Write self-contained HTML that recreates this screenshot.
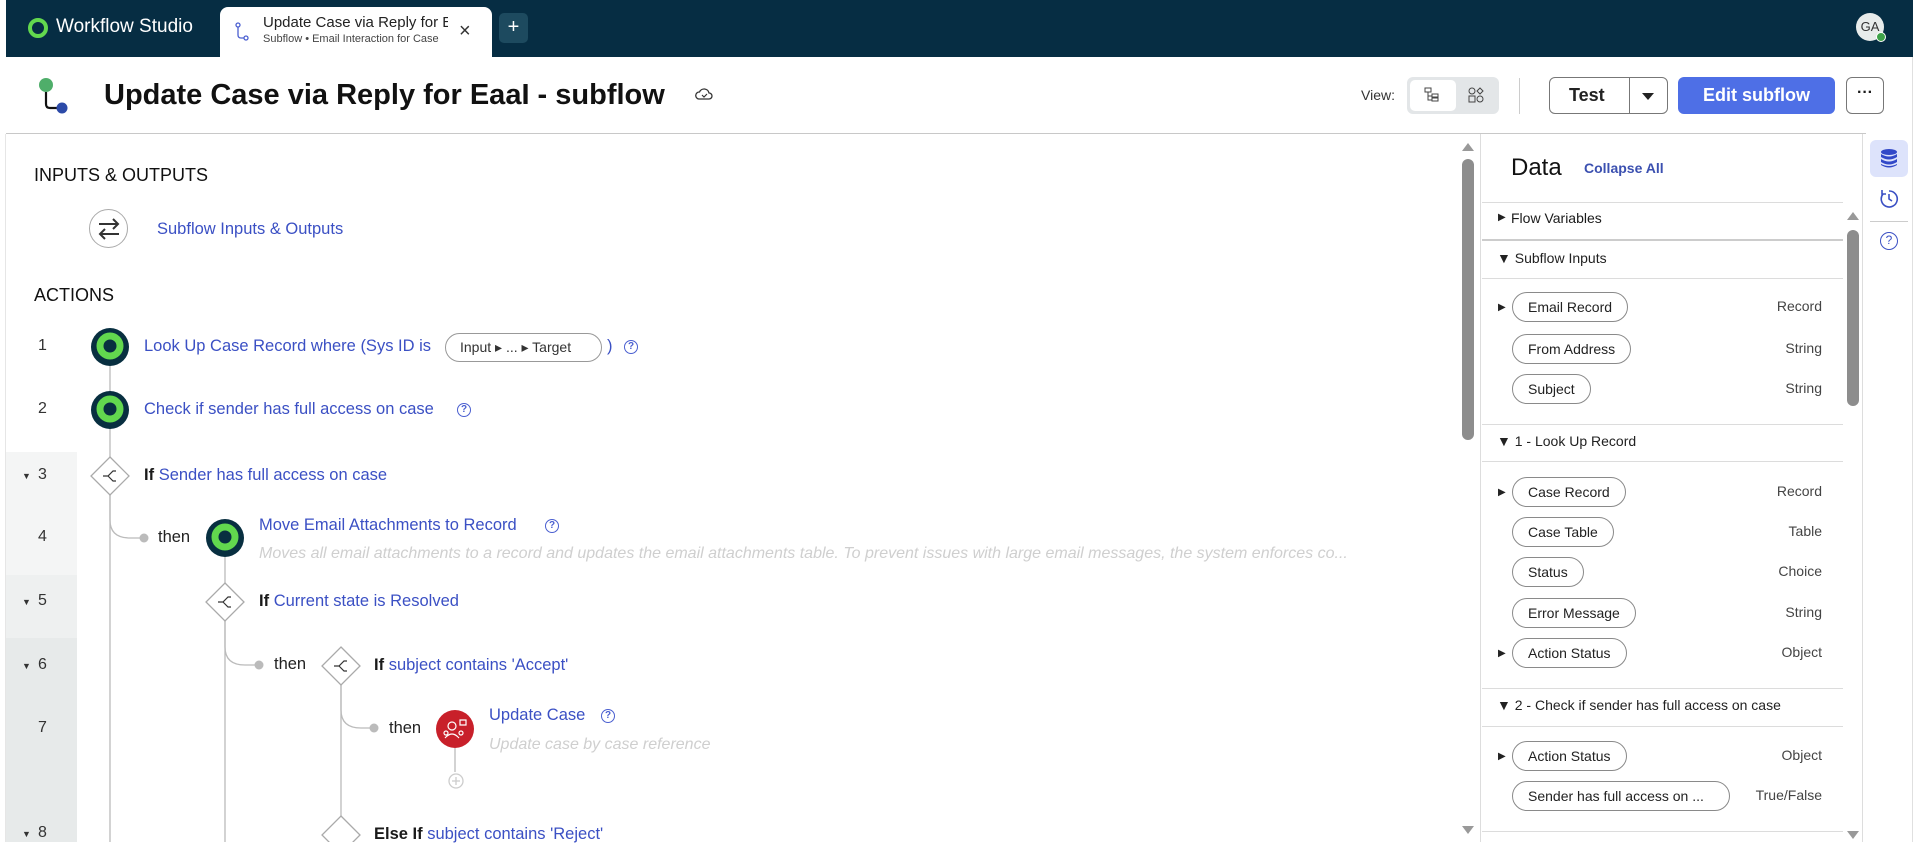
<!DOCTYPE html>
<html><head><meta charset="utf-8">
<style>
*{box-sizing:border-box;margin:0;padding:0}
body{width:1918px;height:842px;overflow:hidden;background:#fff;font-family:"Liberation Sans",sans-serif;color:#1a1a1a;position:relative}
.a{position:absolute;white-space:nowrap}
.lnk{color:#3b50c4}
.q{position:absolute;width:14px;height:14px;border:1.5px solid #4a5fd0;border-radius:50%;font-size:10px;color:#4a5fd0;text-align:center;line-height:11px;font-weight:bold}
.num{position:absolute;left:38px;font-size:16px;color:#333}
.tri{position:absolute;left:22px;font-size:9px;color:#333}
.pill{position:absolute;left:1512px;height:30px;border:1px solid #8a8a8a;border-radius:15px;padding:0 15px;font-size:14px;line-height:28px;color:#222}
.ty{position:absolute;right:96px;font-size:14px;color:#444}
.sh{position:absolute;left:1497px;font-size:14px;color:#222}
.hl{position:absolute;left:1482px;width:361px;height:1px;background:#dcdcdc}
.arr{position:absolute;left:1498px;font-size:10px;color:#222}
.cv{font-size:16.5px}
</style></head><body>
<!-- top bar -->
<div class="a" style="left:6px;top:0;width:1907px;height:57px;background:#062d43"></div>
<div class="a" style="left:28px;top:18px;width:20px;height:20px;border-radius:50%;border:4px solid #62d84e"></div>
<div class="a" style="left:56px;top:16px;font-size:19px;color:#fff">Workflow Studio</div>
<div class="a" style="left:220px;top:7px;width:272px;height:50px;background:#fff;border-radius:8px 8px 0 0"></div>
<svg class="a" style="left:234px;top:22px" width="16" height="20" viewBox="0 0 16 20"><circle cx="4" cy="3" r="2" fill="none" stroke="#4a5fd0" stroke-width="1.3"/><path d="M4 5v8q0 3 3 3h3" fill="none" stroke="#4a5fd0" stroke-width="1.3"/><circle cx="12" cy="16" r="2" fill="none" stroke="#4a5fd0" stroke-width="1.3"/></svg>
<div class="a" style="left:263px;top:14px;font-size:15px;color:#222;width:185px;overflow:hidden">Update Case via Reply for Eaal</div>
<div class="a" style="left:263px;top:33px;font-size:11px;color:#444;width:185px;overflow:hidden">Subflow • Email Interaction for Case</div>
<div class="a" style="left:459px;top:20px;font-size:20px;color:#333">×</div>
<div class="a" style="left:499px;top:13px;width:29px;height:30px;background:#1d4a5f;border-radius:5px;color:#fff;font-size:20px;text-align:center;line-height:28px">+</div>
<div class="a" style="left:1856px;top:13px;width:28px;height:28px;border-radius:50%;background:#e8eceb;font-size:13px;color:#333;text-align:center;line-height:28px">GA</div>
<div class="a" style="left:1876px;top:32px;width:10px;height:10px;border-radius:50%;background:#3fa34a;border:1.5px solid #fff"></div>
<!-- header -->
<svg class="a" style="left:34px;top:76px" width="36" height="40" viewBox="0 0 36 40"><circle cx="12" cy="9" r="7" fill="#4fae6a"/><path d="M12 16v12q0 4 4 4h9" fill="none" stroke="#111" stroke-width="2.2"/><circle cx="28" cy="32" r="5.5" fill="#2c4aa8"/></svg>
<div class="a" style="left:104px;top:79px;font-size:29px;font-weight:bold;color:#111">Update Case via Reply for EaaI - subflow</div>
<svg class="a" style="left:695px;top:87px" width="18" height="14" viewBox="0 0 18 14"><path d="M4 12h10a3 3 0 000-6 5 5 0 00-9.5-1A3.5 3.5 0 004 12z" fill="none" stroke="#333" stroke-width="1.3"/><path d="M7 8l2 2 3-3" fill="none" stroke="#333" stroke-width="1.2"/></svg>
<div class="a" style="left:1361px;top:87px;font-size:14px;color:#333">View:</div>
<div class="a" style="left:1407px;top:77px;width:92px;height:37px;background:#e3e6e8;border-radius:6px"></div>
<div class="a" style="left:1410px;top:80px;width:46px;height:31px;background:#fff;border-radius:5px"></div>
<svg class="a" style="left:1424px;top:87px" width="16" height="16" viewBox="0 0 16 16" fill="none" stroke="#444" stroke-width="1"><rect x="1" y="1" width="6" height="4"/><path d="M4 5v8h4M4 9h4"/><rect x="8" y="7" width="6" height="3"/><rect x="8" y="11" width="6" height="3"/></svg>
<svg class="a" style="left:1468px;top:87px" width="16" height="16" viewBox="0 0 16 16" fill="none" stroke="#444" stroke-width="1"><circle cx="4" cy="4" r="3"/><path d="M12 1l3 3-3 3-3-3z"/><rect x="1" y="9" width="6" height="6"/><circle cx="12" cy="12" r="3"/></svg>
<div class="a" style="left:1519px;top:78px;width:1px;height:36px;background:#ccc"></div>
<div class="a" style="left:1549px;top:77px;width:119px;height:37px;border:1px solid #777;border-radius:6px"></div>
<div class="a" style="left:1629px;top:77px;width:1px;height:37px;background:#777"></div>
<div class="a" style="left:1569px;top:85px;font-size:18px;font-weight:bold;color:#222">Test</div>
<div class="a" style="left:1642px;top:93px;width:0;height:0;border-left:6px solid transparent;border-right:6px solid transparent;border-top:7px solid #222"></div>
<div class="a" style="left:1678px;top:77px;width:157px;height:37px;background:#4e6fe6;border-radius:6px;color:#fff;font-size:18px;font-weight:bold;text-align:center;line-height:37px">Edit subflow</div>
<div class="a" style="left:1846px;top:77px;width:38px;height:37px;border:1px solid #777;border-radius:6px;text-align:center;font-size:16px;font-weight:bold;line-height:30px">···</div>
<div class="a" style="left:6px;top:133px;width:1860px;height:1px;background:#c8c8c8"></div>
<div class="a" style="left:1912px;top:57px;width:1px;height:785px;background:#e0e0e0"></div>
<div class="a" style="left:5px;top:134px;width:1px;height:708px;background:#e6e6e6"></div>
<!-- gutter -->
<div class="a" style="left:6px;top:452px;width:71px;height:123px;background:#f4f5f5"></div>
<div class="a" style="left:6px;top:575px;width:71px;height:63px;background:#eef0f0"></div>
<div class="a" style="left:6px;top:638px;width:71px;height:204px;background:#e7eaea"></div>
<!-- canvas -->
<div class="a" style="left:34px;top:165px;font-size:18px;color:#111">INPUTS &amp; OUTPUTS</div>
<div class="a" style="left:89px;top:209px;width:39px;height:39px;border:1px solid #aaa;border-radius:50%"></div>
<svg class="a" style="left:96px;top:216px" width="26" height="26" viewBox="0 0 26 26" fill="none" stroke="#333" stroke-width="2"><path d="M3 8h19M17 3l5 5-5 5M23 18H4M9 13l-5 5 5 5"/></svg>
<div class="a lnk" style="left:157px;top:220px;font-size:16.5px">Subflow Inputs &amp; Outputs</div>
<div class="a" style="left:34px;top:285px;font-size:18px;color:#111">ACTIONS</div>
<svg class="a" style="left:0;top:0" width="1460" height="842" fill="none" stroke="#bbb" stroke-width="1.3">
<path d="M110 366V842"/>
<path d="M110 495v25q0 18 20 18h14"/>
<path d="M225 557V842"/>
<path d="M225 621v26q0 18 20 18h14"/>
<path d="M341 685V842"/>
<path d="M341 685v25q0 18 20 18h13"/>
<path d="M455 748v24"/>
<circle cx="456" cy="781" r="7" stroke="#ccc"/><path d="M456 777v8M452 781h8" stroke="#ccc"/>
<circle cx="144" cy="538" r="4.5" fill="#bbb" stroke="none"/>
<circle cx="259" cy="665" r="4.5" fill="#bbb" stroke="none"/>
<circle cx="374" cy="728" r="4.5" fill="#bbb" stroke="none"/>
<g fill="#fff" stroke="#aaa"><path d="M110 457l19 19-19 19-19-19z"/><path d="M225 583l19 19-19 19-19-19z"/><path d="M341 647l19 19-19 19-19-19z"/><path d="M341 816l19 19-19 19-19-19z"/></g>
<g stroke="#333" stroke-width="1.2"><path d="M103 476h5l5-5h3M108 476l5 5h3"/><path d="M218 602h5l5-5h3M223 602l5 5h3"/><path d="M334 666h5l5-5h3M339 666l5 5h3"/></g>
<g><circle cx="110" cy="347" r="19" fill="#082f40" stroke="none"/><circle cx="110" cy="346" r="10" fill="none" stroke="#62d84e" stroke-width="7"/>
<circle cx="110" cy="410" r="19" fill="#082f40" stroke="none"/><circle cx="110" cy="409" r="10" fill="none" stroke="#62d84e" stroke-width="7"/>
<circle cx="225" cy="538" r="19" fill="#082f40" stroke="none"/><circle cx="225" cy="537" r="10" fill="none" stroke="#62d84e" stroke-width="7"/>
<circle cx="455" cy="729" r="19" fill="#c8202a" stroke="none"/><g stroke="#fff" stroke-width="1.2"><circle cx="452" cy="726" r="4"/><path d="M445 738q7-8 14 0M460 720h6v5h-6z"/><circle cx="446" cy="733" r="2"/><circle cx="461" cy="733" r="2"/></g></g>
</svg>
<div class="num" style="top:337px">1</div>
<div class="num" style="top:400px">2</div>
<div class="tri" style="top:471px">▼</div><div class="num" style="top:466px">3</div>
<div class="num" style="top:528px">4</div>
<div class="tri" style="top:597px">▼</div><div class="num" style="top:592px">5</div>
<div class="tri" style="top:661px">▼</div><div class="num" style="top:656px">6</div>
<div class="num" style="top:719px">7</div>
<div class="tri" style="top:829px">▼</div><div class="num" style="top:824px">8</div>
<div class="a lnk cv" style="left:144px;top:337px">Look Up Case Record where (Sys ID is</div>
<div class="a" style="left:445px;top:333px;width:157px;height:29px;border:1px solid #999;border-radius:15px;font-size:14px;color:#333;line-height:27px;padding-left:14px">Input ▸ ... ▸ Target</div>
<div class="a lnk cv" style="left:607px;top:337px">)</div>
<div class="q" style="left:624px;top:340px">?</div>
<div class="a lnk cv" style="left:144px;top:400px">Check if sender has full access on case</div>
<div class="q" style="left:457px;top:403px">?</div>
<div class="a cv" style="left:144px;top:466px"><b>If</b> <span class="lnk">Sender has full access on case</span></div>
<div class="a cv" style="left:158px;top:528px;color:#222">then</div>
<div class="a lnk cv" style="left:259px;top:516px">Move Email Attachments to Record</div>
<div class="q" style="left:545px;top:519px">?</div>
<div class="a" style="left:259px;top:545px;font-size:16px;font-style:italic;color:#cfcfcf;width:1113px;overflow:hidden">Moves all email attachments to a record and updates the email attachments table. To prevent issues with large email messages, the system enforces co...</div>
<div class="a cv" style="left:259px;top:592px"><b>If</b> <span class="lnk">Current state is Resolved</span></div>
<div class="a cv" style="left:274px;top:655px;color:#222">then</div>
<div class="a cv" style="left:374px;top:656px"><b>If</b> <span class="lnk">subject contains 'Accept'</span></div>
<div class="a cv" style="left:389px;top:719px;color:#222">then</div>
<div class="a lnk cv" style="left:489px;top:706px">Update Case</div>
<div class="q" style="left:601px;top:709px">?</div>
<div class="a" style="left:489px;top:736px;font-size:16px;font-style:italic;color:#cfcfcf">Update case by case reference</div>
<div class="a cv" style="left:374px;top:825px"><b>Else If</b> <span class="lnk">subject contains 'Reject'</span></div>
<!-- canvas scrollbar -->
<div class="a" style="left:1462px;top:143px;width:0;height:0;border-left:6px solid transparent;border-right:6px solid transparent;border-bottom:8px solid #999"></div>
<div class="a" style="left:1462px;top:159px;width:12px;height:281px;background:#8d8d8d;border-radius:6px"></div>
<div class="a" style="left:1462px;top:826px;width:0;height:0;border-left:6px solid transparent;border-right:6px solid transparent;border-top:8px solid #999"></div>
<div class="a" style="left:1480px;top:134px;width:1px;height:708px;background:#ddd"></div>
<!-- data panel -->
<div class="a" style="left:1511px;top:154px;font-size:24px;color:#111">Data</div>
<div class="a" style="left:1584px;top:160px;font-size:14px;font-weight:bold;color:#3b50b0">Collapse All</div>
<div class="hl" style="top:202px"></div>
<div class="arr" style="top:212px">▶</div><div class="a" style="left:1511px;top:210px;font-size:14px">Flow Variables</div>
<div class="hl" style="top:239px;height:2px;background:#ccc"></div>
<div class="sh" style="top:250px">▼ Subflow Inputs</div>
<div class="hl" style="top:278px"></div>
<div class="arr" style="top:302px">▶</div><div class="pill" style="top:292px">Email Record</div><div class="ty" style="top:298px">Record</div>
<div class="pill" style="top:334px">From Address</div><div class="ty" style="top:340px">String</div>
<div class="pill" style="top:374px">Subject</div><div class="ty" style="top:380px">String</div>
<div class="hl" style="top:424px"></div>
<div class="sh" style="top:433px">▼ 1 - Look Up Record</div>
<div class="hl" style="top:461px"></div>
<div class="arr" style="top:487px">▶</div><div class="pill" style="top:477px">Case Record</div><div class="ty" style="top:483px">Record</div>
<div class="pill" style="top:517px">Case Table</div><div class="ty" style="top:523px">Table</div>
<div class="pill" style="top:557px">Status</div><div class="ty" style="top:563px">Choice</div>
<div class="pill" style="top:598px">Error Message</div><div class="ty" style="top:604px">String</div>
<div class="arr" style="top:648px">▶</div><div class="pill" style="top:638px">Action Status</div><div class="ty" style="top:644px">Object</div>
<div class="hl" style="top:688px"></div>
<div class="sh" style="top:697px">▼ 2 - Check if sender has full access on case</div>
<div class="hl" style="top:726px"></div>
<div class="arr" style="top:751px">▶</div><div class="pill" style="top:741px">Action Status</div><div class="ty" style="top:747px">Object</div>
<div class="pill" style="top:781px;width:218px">Sender has full access on ...</div><div class="ty" style="top:787px">True/False</div>
<div class="hl" style="top:831px"></div>
<!-- panel scrollbar -->
<div class="a" style="left:1847px;top:212px;width:0;height:0;border-left:6px solid transparent;border-right:6px solid transparent;border-bottom:8px solid #999"></div>
<div class="a" style="left:1847px;top:230px;width:12px;height:176px;background:#8d8d8d;border-radius:6px"></div>
<div class="a" style="left:1847px;top:831px;width:0;height:0;border-left:6px solid transparent;border-right:6px solid transparent;border-top:8px solid #999"></div>
<div class="a" style="left:1862px;top:134px;width:1px;height:708px;background:#ddd"></div>
<!-- icon strip -->
<div class="a" style="left:1870px;top:140px;width:38px;height:37px;background:#dde3fb;border-radius:6px"></div>
<svg class="a" style="left:1880px;top:148px" width="18" height="20" viewBox="0 0 18 20" fill="#3249c8"><ellipse cx="9" cy="4" rx="8" ry="3"/><path d="M1 6q8 5 16 0v3q-8 5-16 0zM1 11q8 5 16 0v3q-8 5-16 0zM1 16q8 4 16 0v1q-8 5-16 0z"/></svg>
<svg class="a" style="left:1879px;top:188px" width="20" height="20" viewBox="0 0 20 20" fill="none" stroke="#3b50c4" stroke-width="1.6"><path d="M4 6a8 8 0 1 0 6-3"/><path d="M3 2v4h4M10 6v5l3 2"/></svg>
<div class="a" style="left:1870px;top:221px;width:38px;height:1px;background:#ccc"></div>
<div class="a" style="left:1880px;top:232px;width:18px;height:18px;border:1.6px solid #3b50c4;border-radius:50%;color:#3b50c4;font-size:12px;text-align:center;line-height:15px">?</div>
</body></html>
